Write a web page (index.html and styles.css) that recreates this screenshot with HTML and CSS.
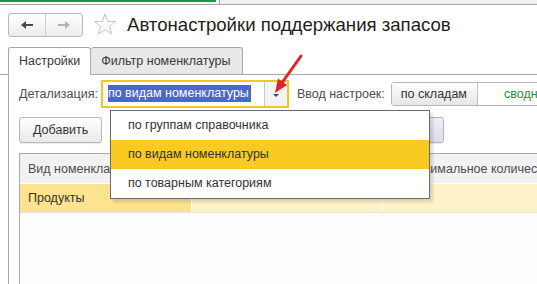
FILE: index.html
```html
<!DOCTYPE html>
<html lang="ru">
<head>
    <meta charset="UTF-8">
    <title>Автонастройки поддержания запасов</title>
    <link rel="stylesheet" href="styles.css">
</head>

<body>
<div class="page">
    <div class="taskbar">
        <div class="task-active"></div>
        <div class="task-rest"></div>
    </div>

    <div class="header">
        <div class="nav">
            <span class="nav-btn">
                <svg width="12" height="8" viewBox="0 0 12 8"><path d="M0 4 L5 0 L5 3 L12 3 L12 5 L5 5 L5 8 Z" fill="#4a4a4a"/></svg>
            </span>
            <span class="nav-btn">
                <svg width="12" height="8" viewBox="0 0 12 8"><path d="M12 4 L7 0 L7 3 L0 3 L0 5 L7 5 L7 8 Z" fill="#b4b4b4"/></svg>
            </span>
        </div>
        <svg class="star" width="24" height="24" viewBox="0 0 24 24">
            <polygon points="12,1 14.7,8.3 22.5,8.6 16.4,13.4 18.5,20.9 12,16.6 5.5,20.9 7.6,13.4 1.5,8.6 9.3,8.3" fill="none" stroke="#c4c4c4" stroke-width="1"/>
        </svg>
        <h1 class="title">Автонастройки поддержания запасов</h1>
    </div>

    <div class="tabs">
        <div class="tab tab-active">Настройки</div>
        <div class="tab">Фильтр номенклатуры</div>
    </div>

    <div class="panel">
        <div class="line">
            <span class="label">Детализация:</span>
            <div class="combo">
                <div class="combo-input"><span class="selected">по видам номенклатуры</span></div>
                <div class="combo-btn"><span class="caret"></span></div>
                <ul class="dropdown">
                    <li>по группам справочника</li>
                    <li class="current">по видам номенклатуры</li>
                    <li>по товарным категориям</li>
                </ul>
            </div>
            <span class="label label-gap">Ввод настроек:</span>
            <div class="switch">
                <span class="switch-btn">по складам</span>
                <span class="switch-opt">сводно</span>
            </div>
        </div>

        <div class="line line-buttons">
            <button class="btn">Добавить</button>
            <button class="btn btn-fill">Заполнить по видам</button>
        </div>

        <div class="grid">
            <div class="cell head">Вид номенклатуры</div>
            <div class="cell head">Минимальное количество</div>
            <div class="cell head head-last">Максимальное количество</div>
            <div class="cell row row-first">Продукты</div>
            <div class="cell row"></div>
            <div class="cell row"></div>
        </div>
    </div>

    <svg class="pointer" width="537" height="284" viewBox="0 0 537 284">
        <line x1="301" y1="56" x2="282.5" y2="82" stroke="#e8231f" stroke-width="3" stroke-linecap="round"/>
        <polygon points="275,93 287,85 278,78.5" fill="#e8231f"/>
    </svg>
</div>
</body>

</html>
```

FILE: styles.css
```css
html, body {
    margin: 0;
    padding: 0;
    overflow: hidden;
    background: #fff;
}

body {
    font-family: "Liberation Sans", Arial, sans-serif;
    font-size: 12.5px;
    color: #333;
}

.page {
    position: relative;
    width: 640px;
    height: 284px;
}

/* window strip on top */
.taskbar {
    display: flex;
    height: 4px;
    border-bottom: 1px solid #a4a4a4;
}

.task-active {
    width: 216px;
    border-top: 2px solid #16994a;
}

.task-rest {
    flex: 1;
    margin-left: 3px;
    border-left: 1px solid #a4a4a4;
    background: #f0f0f0;
}

.header {
    display: flex;
    align-items: center;
    padding: 8px 8px 0 8px;
}

.nav {
    display: flex;
    height: 24px;
    border: 1px solid #b9b9b9;
    border-radius: 3px;
    background: linear-gradient(#ffffff, #ececec);
    box-sizing: border-box;
}

.nav-btn {
    width: 36px;
    display: flex;
    align-items: center;
    justify-content: center;
}

.nav-btn:first-child {
    border-right: 1px solid #cfcfcf;
}

.star {
    margin-left: 10px;
    display: block;
}

.title {
    margin: 0 0 0 10px;
    font-size: 18.6px;
    font-weight: normal;
    color: #1e1e1e;
}

/* tabs */
.tabs {
    display: flex;
    align-items: flex-end;
    margin-top: 10px;
    padding-left: 8px;
    border-bottom: 1px solid #a8a8a8;
}

.tab {
    height: 26px;
    line-height: 26px;
    padding: 0 11px 0 10px;
    border: 1px solid #a8a8a8;
    border-bottom: none;
    border-radius: 3px 3px 0 0;
    background: #e8e8e8;
    color: #3a3a3a;
}

.tab + .tab {
    border-left: none;
}

.tab-active {
    background: #fff;
    padding-right: 10px;
    margin-bottom: -1px;
    border-bottom: 1px solid #fff;
}

.panel {
    margin-left: 8px;
    padding: 5px 0 0 10px;
    border-left: 1px solid #a8a8a8;
    height: 220px;
}

.line {
    display: flex;
    align-items: center;
}

.line-buttons {
    margin-top: 9px;
    gap: 8px;
}

.label {
    color: #4d4d4d;
    margin-right: 3px;
}

.label-gap {
    margin-left: 8px;
    margin-right: 6px;
}

/* combo box */
.combo {
    position: relative;
    display: flex;
    width: 188px;
    height: 28px;
    border: 2px solid #f5c520;
    box-sizing: border-box;
    background: #fff;
}

.combo-input {
    flex: 1;
    display: flex;
    align-items: center;
    padding-left: 5px;
}

.selected {
    background: #4a68cc;
    color: #fff;
    line-height: 17px;
    padding-right: 2px;
    margin-top: -1px;
}

.combo-btn {
    width: 22px;
    border-left: 1px solid #c9c9c9;
    background: #f3f3f3;
    display: flex;
    align-items: center;
    justify-content: center;
}

.caret {
    width: 0;
    height: 0;
    border-style: solid;
    border-width: 3px 3px 0 3px;
    border-color: #444 transparent transparent transparent;
    margin-top: 2px;
}

.dropdown {
    position: absolute;
    left: 7px;
    top: 28px;
    width: 318px;
    margin: 0;
    padding: 0;
    list-style: none;
    border: 1px solid #6a6a6a;
    background: #fff;
    box-shadow: 3px 3px 3px rgba(0, 0, 0, 0.14);
    z-index: 5;
}

.dropdown li {
    height: 29px;
    line-height: 29px;
    padding-left: 17px;
    color: #333;
}

.dropdown .current {
    background: #f9cb22;
}

/* switch */
.switch {
    display: flex;
    height: 24px;
    width: 200px;
    border: 1px solid #b5b5b5;
    border-radius: 3px;
    box-sizing: border-box;
    line-height: 22px;
}

.switch-btn {
    padding: 0 10px 0 9px;
    background: linear-gradient(#ffffff, #e6e6e6);
    border-right: 1px solid #c2c2c2;
    color: #333;
}

.switch-opt {
    padding-left: 26px;
    color: #1f8f3a;
}

/* buttons */
.btn {
    height: 26px;
    padding: 0 13px;
    font-family: inherit;
    font-size: 12.5px;
    color: #333;
    border: 1px solid #b8b8b8;
    border-radius: 3px;
    background: linear-gradient(#ffffff, #e9e9e9);
    box-shadow: 0 1px 1px rgba(0, 0, 0, 0.08);
}

.btn-fill {
    width: 334px;
    background: linear-gradient(#efeff8, #dcdcea);
    border-color: #b4b4c4;
}

/* table */
.grid {
    display: grid;
    grid-template-columns: 172px 191px 240px;
    grid-template-rows: 30px 29px;
    margin-top: 10px;
    height: 140px;
    border-top: 1px solid #a8a8a8;
    border-left: 1px solid #a8a8a8;
    background: #fdfdfd;
}

.cell {
    padding-left: 8px;
    display: flex;
    align-items: center;
    white-space: nowrap;
    overflow: hidden;
}

.head {
    background: #f2f2f2;
    border-right: 1px solid #dadada;
    border-bottom: 1px solid #fff;
    color: #4d4d4d;
}

.head-last {
    padding-left: 18px;
}

.row {
    background: #fef3c8;
    border-right: 1px solid #fff;
    border-bottom: 1px solid #e2e2e2;
}

.row-first {
    background: #fde38f;
    color: #333;
}

.pointer {
    position: absolute;
    left: 0;
    top: 0;
    pointer-events: none;
    z-index: 10;
}
```
